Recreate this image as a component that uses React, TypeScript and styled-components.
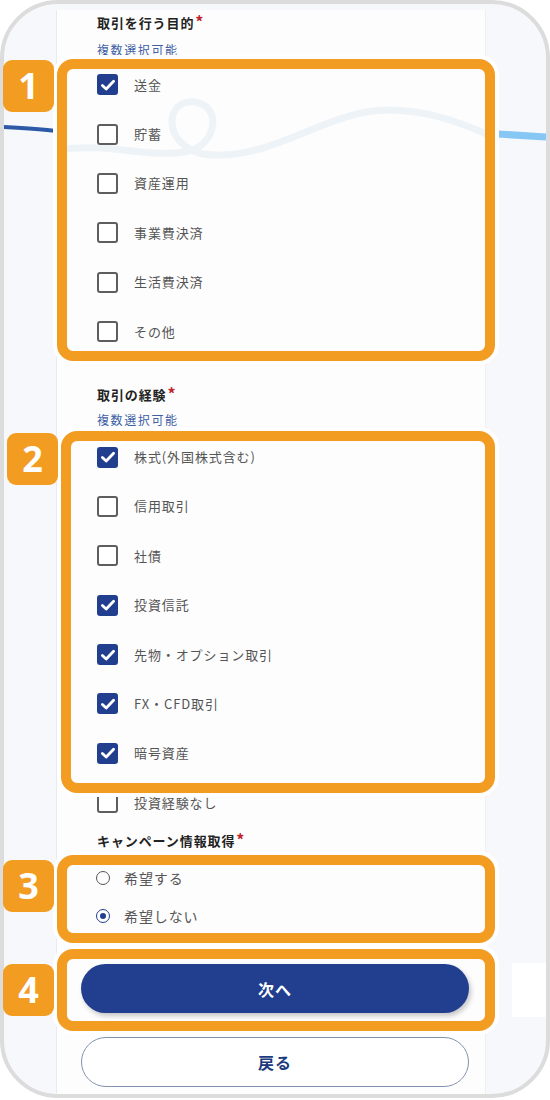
import React from "react";
import styled, { createGlobalStyle } from "styled-components";

const Global = createGlobalStyle`
  html, body { margin: 0; padding: 0; background: #ffffff; }
  body { font-family: "Noto Sans CJK JP", "Noto Sans", sans-serif; }
  * { box-sizing: border-box; }
`;

const NAVY = "#213f8e";
const ORANGE = "#f39c22";

const Root = styled.div`
  position: relative;
  width: 550px;
  height: 1100px;
  overflow: hidden;
`;

const Frame = styled.div`
  position: relative;
  width: 550px;
  height: 1098px;
  border: 4px solid #dcdcdc;
  border-radius: 58px;
  overflow: hidden;
  background: #f7f8fc;
`;

const StripWaves = styled.svg`
  position: absolute;
  left: 0;
  top: 0;
  width: 542px;
  height: 300px;
  z-index: 0;
`;

const SideBlock = styled.div`
  position: absolute;
  left: 508px;
  top: 959px;
  width: 40px;
  height: 54px;
  background: #ffffff;
`;

const Panel = styled.div`
  position: relative;
  z-index: 1;
  margin-left: 52px;
  margin-top: 6px;
  width: 430px;
  height: 1100px;
  background: #fdfdfd;
  border-left: 1px solid #e8ebf1;
  border-right: 1px solid #eef0f5;
  padding-top: 3px;
  display: flex;
  flex-direction: column;
`;

const FaintWave = styled.svg`
  position: absolute;
  left: 0;
  top: 0;
  width: 430px;
  height: 220px;
  z-index: 0;
`;

const Section = styled.section<{ $mt?: number }>`
  position: relative;
  z-index: 1;
  padding-left: 40px;
  margin-top: ${(p) => p.$mt ?? 0}px;
  display: flex;
  flex-direction: column;
`;

const Title = styled.h2`
  margin: 0;
  height: 20px;
  font-size: 13px;
  line-height: 20px;
  font-weight: 700;
  color: #222222;
  letter-spacing: 0.9px;
  white-space: nowrap;
`;

const Star = styled.span`
  color: #c0262c;
  font-size: 16px;
  line-height: 0;
  margin-left: 1px;
`;

const Sub = styled.div<{ $mt: number }>`
  margin-top: ${(p) => p.$mt}px;
  height: 16px;
  font-size: 12px;
  line-height: 16px;
  color: #3d5fa6;
  letter-spacing: 1.6px;
`;

const List = styled.div<{ $mt: number }>`
  margin-top: ${(p) => p.$mt}px;
  display: flex;
  flex-direction: column;
`;

const Row = styled.label`
  height: 49.4px;
  display: flex;
  align-items: center;
`;

const Box = styled.span<{ $on: boolean }>`
  width: 21px;
  height: 21px;
  border-radius: 3px;
  border: ${(p) => (p.$on ? "none" : "2px solid #5e5e5e")};
  background: ${(p) => (p.$on ? NAVY : "#ffffff")};
  display: flex;
  align-items: center;
  justify-content: center;
  flex-shrink: 0;
`;

const Label = styled.span<{ $gap: number; $size: number }>`
  margin-left: ${(p) => p.$gap}px;
  font-size: ${(p) => p.$size}px;
  line-height: 20px;
  color: #555555;
  letter-spacing: 0.9px;
`;

const RadioRow = styled.label`
  height: 38px;
  display: flex;
  align-items: center;
  margin-left: -1px;
`;

const Radio = styled.span<{ $on: boolean }>`
  width: 14px;
  height: 14px;
  border-radius: 50%;
  border: 1.5px solid ${(p) => (p.$on ? NAVY : "#555555")};
  display: flex;
  align-items: center;
  justify-content: center;
  flex-shrink: 0;
  &::after {
    content: "";
    display: ${(p) => (p.$on ? "block" : "none")};
    width: 6px;
    height: 6px;
    border-radius: 50%;
    background: ${NAVY};
  }
`;

const Buttons = styled.div`
  position: relative;
  z-index: 1;
  margin-top: 29px;
  padding-left: 24px;
  display: flex;
  flex-direction: column;
  gap: 24px;
`;

const Primary = styled.button`
  width: 388px;
  height: 49px;
  border: none;
  border-radius: 25px;
  background: ${NAVY};
  color: #ffffff;
  font-family: "Noto Sans CJK JP", sans-serif;
  font-size: 16px;
  font-weight: 700;
  letter-spacing: 1px;
  box-shadow: 2px 3px 5px rgba(0, 0, 0, 0.22);
`;

const Secondary = styled.button`
  width: 388px;
  height: 50px;
  border: 1px solid #8192ad;
  border-radius: 25px;
  background: #ffffff;
  color: #1c3a80;
  font-family: "Noto Sans CJK JP", sans-serif;
  font-size: 16px;
  font-weight: 700;
  letter-spacing: 1px;
`;

const Highlight = styled.div<{ $x: number; $y: number; $w: number; $h: number }>`
  position: absolute;
  left: ${(p) => p.$x}px;
  top: ${(p) => p.$y}px;
  width: ${(p) => p.$w}px;
  height: ${(p) => p.$h}px;
  border: 10px solid ${ORANGE};
  border-radius: 16px;
  box-shadow: 0 0 0 4px #ffffff;
  pointer-events: none;
  z-index: 5;
`;

const Badge = styled.div<{ $x: number; $y: number }>`
  position: absolute;
  left: ${(p) => p.$x}px;
  top: ${(p) => p.$y}px;
  width: 51px;
  height: 52px;
  border-radius: 9px;
  background: ${ORANGE};
  color: #ffffff;
  font-family: "Open Sans", "Noto Sans", sans-serif;
  font-weight: 700;
  font-size: 36px;
  line-height: 52px;
  text-align: center;
  z-index: 6;
`;

const Check = () => (
  <svg width="16" height="16" viewBox="0 0 16 16">
    <path d="M2.4 8.4 L6.2 12 L13.6 4.2" fill="none" stroke="#ffffff" strokeWidth="2.8" strokeLinecap="round" strokeLinejoin="round" />
  </svg>
);

type Item = { label: string; on: boolean };

const purpose: Item[] = [
  { label: "送金", on: true },
  { label: "貯蓄", on: false },
  { label: "資産運用", on: false },
  { label: "事業費決済", on: false },
  { label: "生活費決済", on: false },
  { label: "その他", on: false },
];

const experience: Item[] = [
  { label: "株式(外国株式含む)", on: true },
  { label: "信用取引", on: false },
  { label: "社債", on: false },
  { label: "投資信託", on: true },
  { label: "先物・オプション取引", on: true },
  { label: "FX・CFD取引", on: true },
  { label: "暗号資産", on: true },
  { label: "投資経験なし", on: false },
];

const CheckList = ({ items, mt }: { items: Item[]; mt: number }) => (
  <List $mt={mt}>
    {items.map((it) => (
      <Row key={it.label}>
        <Box $on={it.on}>{it.on && <Check />}</Box>
        <Label $gap={16} $size={13}>{it.label}</Label>
      </Row>
    ))}
  </List>
);

export default function App() {
  return (
    <Root>
      <Global />
      <Frame>
        <StripWaves viewBox="0 0 542 300">
          <path d="M0 123 C20 124 38 125 52 127" stroke="#2c5aa6" strokeWidth="4" fill="none" />
          <path d="M494 130 C510 131 526 132 542 133" stroke="#86c7f4" strokeWidth="7" fill="none" />
        </StripWaves>
        <SideBlock />
        <Panel>
          <FaintWave viewBox="0 0 430 220">
            <path
              d="M0 140 C50 132 90 148 128 142 C160 137 166 96 138 92 C108 88 104 134 146 144 C210 154 270 100 330 100 C372 100 400 112 430 124"
              stroke="#eef3f8"
              strokeWidth="7"
              fill="none"
            />
          </FaintWave>
          <Section>
            <Title>
              取引を行う目的<Star>*</Star>
            </Title>
            <Sub $mt={9}>複数選択可能</Sub>
            <CheckList items={purpose} mt={2} />
          </Section>
          <Section $mt={29}>
            <Title>
              取引の経験<Star>*</Star>
            </Title>
            <Sub $mt={7}>複数選択可能</Sub>
            <CheckList items={experience} mt={4} />
          </Section>
          <Section $mt={4}>
            <Title>
              キャンペーン情報取得<Star>*</Star>
            </Title>
            <List $mt={8}>
              <RadioRow>
                <Radio $on={false} />
                <Label $gap={14} $size={14}>希望する</Label>
              </RadioRow>
              <RadioRow>
                <Radio $on={true} />
                <Label $gap={14} $size={14}>希望しない</Label>
              </RadioRow>
            </List>
          </Section>
          <Buttons>
            <Primary>次へ</Primary>
            <Secondary>戻る</Secondary>
          </Buttons>
        </Panel>
      </Frame>

      <Highlight $x={57} $y={59} $w={438} $h={302} />
      <Highlight $x={61} $y={431} $w={434} $h={362} />
      <Highlight $x={57} $y={855} $w={438} $h={88} />
      <Highlight $x={57} $y={949} $w={438} $h={82} />

      <Badge $x={3} $y={60}>1</Badge>
      <Badge $x={7} $y={433}>2</Badge>
      <Badge $x={3} $y={860}>3</Badge>
      <Badge $x={3} $y={964}>4</Badge>
    </Root>
  );
}
